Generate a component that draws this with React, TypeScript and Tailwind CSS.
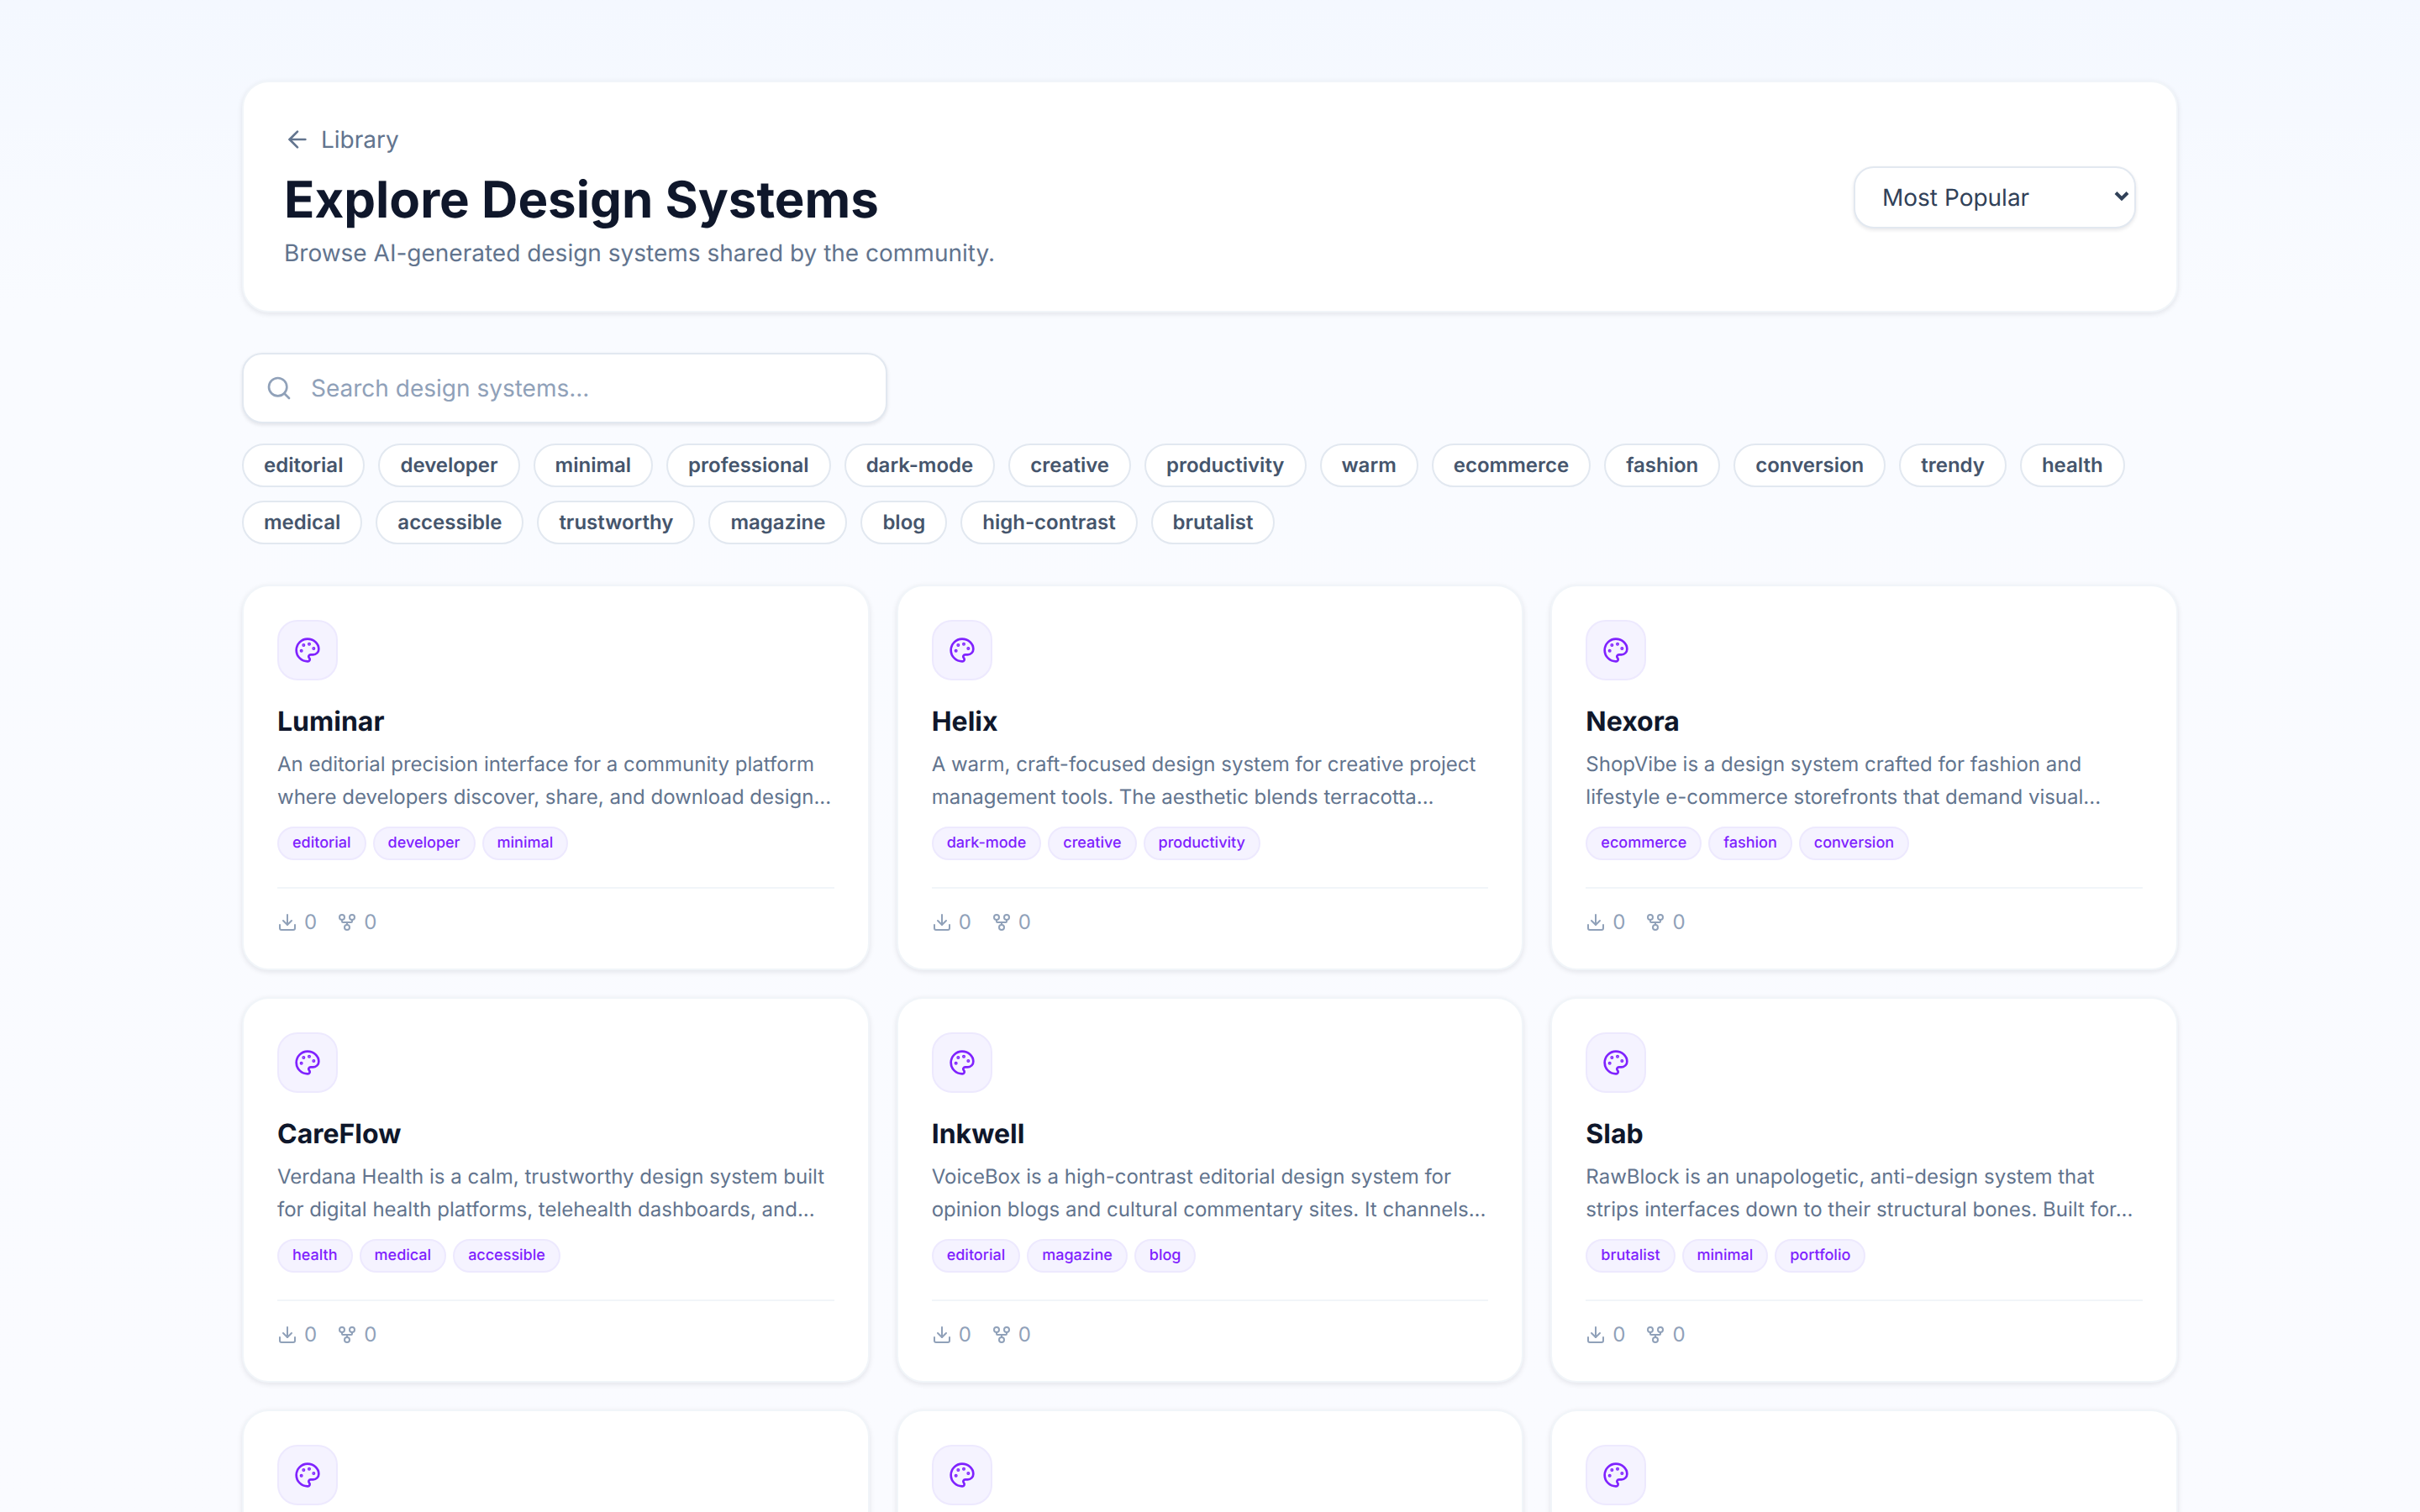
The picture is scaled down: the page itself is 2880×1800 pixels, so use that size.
import { ArrowLeft, Download, GitFork, Palette, Search } from 'lucide-react';

const filterTags = [
  'editorial', 'developer', 'minimal', 'professional', 'dark-mode', 'creative', 'productivity', 'warm',
  'ecommerce', 'fashion', 'conversion', 'trendy', 'health', 'medical', 'accessible', 'trustworthy',
  'magazine', 'blog', 'high-contrast', 'brutalist',
];

const systems = [
  {
    name: 'Luminar',
    description: 'An editorial precision interface for a community platform where developers discover, share, and download design...',
    tags: ['editorial', 'developer', 'minimal'],
  },
  {
    name: 'Helix',
    description: 'A warm, craft-focused design system for creative project management tools. The aesthetic blends terracotta...',
    tags: ['dark-mode', 'creative', 'productivity'],
  },
  {
    name: 'Nexora',
    description: 'ShopVibe is a design system crafted for fashion and lifestyle e-commerce storefronts that demand visual...',
    tags: ['ecommerce', 'fashion', 'conversion'],
  },
  {
    name: 'CareFlow',
    description: 'Verdana Health is a calm, trustworthy design system built for digital health platforms, telehealth dashboards, and...',
    tags: ['health', 'medical', 'accessible'],
  },
  {
    name: 'Inkwell',
    description: 'VoiceBox is a high-contrast editorial design system for opinion blogs and cultural commentary sites. It channels...',
    tags: ['editorial', 'magazine', 'blog'],
  },
  {
    name: 'Slab',
    description: 'RawBlock is an unapologetic, anti-design system that strips interfaces down to their structural bones. Built for...',
    tags: ['brutalist', 'minimal', 'portfolio'],
  },
];

const IconTile = () => (
  <div className="flex h-[72px] w-[72px] items-center justify-center rounded-[24px] border-2 border-violet-100 bg-violet-50">
    <Palette className="h-[32px] w-[32px] text-violet-600" strokeWidth={2} />
  </div>
);

const SystemCard = ({ name, description, tags }: { name: string; description: string; tags: string[] }) => (
  <div className="rounded-[32px] border-2 border-slate-100 bg-white p-[40px] shadow-[0_2px_6px_rgba(15,23,42,0.1)]">
    <IconTile />
    <h3 className="mt-[25px] text-[32px] leading-[48px] font-bold text-slate-900">{name}</h3>
    <p className="mt-[7px] text-[24px] leading-[39px] text-slate-500">{description}</p>
    <div className="mt-[16px] flex gap-[8px]">
      {tags.map((tag) => (
        <span key={tag} className="rounded-full border-2 border-violet-100 bg-violet-50 px-[16px] py-[6px] text-[18px] leading-[24px] font-medium text-violet-600">
          {tag}
        </span>
      ))}
    </div>
    <div className="mt-[32px] flex items-center gap-[24px] border-t-2 border-slate-100 pt-[24px] text-[24px] leading-[31px] text-slate-400">
      <span className="flex items-center gap-[8px]">
        <Download className="h-[24px] w-[24px]" strokeWidth={2} />0
      </span>
      <span className="flex items-center gap-[8px]">
        <GitFork className="h-[24px] w-[24px]" strokeWidth={2} />0
      </span>
    </div>
  </div>
);

export default function App() {
  return (
    <div className="h-screen overflow-hidden bg-gradient-to-b from-[#f4f8ff] via-[#f9fbff] via-20% to-[#fafbff] px-[288px] pt-[96px] font-['Inter',sans-serif] [text-rendering:geometricPrecision]">
      {/* Header */}
      <div className="flex items-center justify-between rounded-[32px] border-2 border-slate-100 bg-white p-[48px] shadow-[0_2px_6px_rgba(15,23,42,0.1)]">
        <div>
          <div className="flex items-center gap-[12px] text-[28px] leading-[40px] text-slate-500">
            <ArrowLeft className="h-[32px] w-[32px]" strokeWidth={2} />
            Library
          </div>
          <h1 className="mt-[16px] text-[60px] leading-[72px] font-bold text-slate-900">Explore Design Systems</h1>
          <p className="mt-[6px] text-[28px] leading-[42px] text-slate-500">Browse AI-generated design systems shared by the community.</p>
        </div>
        <div className="relative mt-[2px] w-[336px]">
          <select className="h-[74px] w-full appearance-none rounded-[24px] border-2 border-slate-200 bg-white px-[32px] text-[28px] text-slate-700 shadow-[0_2px_4px_rgba(15,23,42,0.1)] [text-rendering:geometricPrecision]">
            <option>Most Popular</option>
          </select>
          <svg viewBox="0 0 18 13" className="pointer-events-none absolute top-[29px] right-[8px] h-[13px] w-[18px] text-slate-700" fill="none" stroke="currentColor" strokeWidth="4">
            <polyline points="2,2.5 9,9.5 16,2.5" />
          </svg>
        </div>
      </div>

      {/* Search */}
      <div className="relative mt-[48px] w-[768px]">
        <Search className="absolute top-[26px] left-[28px] h-[32px] w-[32px] text-slate-400" strokeWidth={2} />
        <input
          placeholder="Search design systems..."
          className="h-[84px] w-full rounded-[24px] border-2 border-slate-200 bg-white pr-[32px] pl-[80px] text-[28px] text-slate-700 shadow-[0_2px_4px_rgba(15,23,42,0.1)] [text-rendering:geometricPrecision] placeholder:text-slate-400"
        />
      </div>

      {/* Filter tags */}
      <div className="mt-[24px] flex flex-wrap gap-[16px]">
        {filterTags.map((tag) => (
          <span key={tag} className="rounded-full border-2 border-slate-200 bg-white px-[24px] py-[8px] text-[24px] leading-[32px] font-semibold text-slate-600">
            {tag}
          </span>
        ))}
      </div>

      {/* Cards */}
      <div className="mt-[48px] grid grid-cols-3 gap-[32px]">
        {systems.map((system) => (
          <SystemCard key={system.name} {...system} />
        ))}
        {[0, 1, 2].map((i) => (
          <div key={i} className="h-[459px] rounded-[32px] border-2 border-slate-100 bg-white p-[40px] shadow-[0_2px_6px_rgba(15,23,42,0.1)]">
            <IconTile />
          </div>
        ))}
      </div>
    </div>
  );
}
